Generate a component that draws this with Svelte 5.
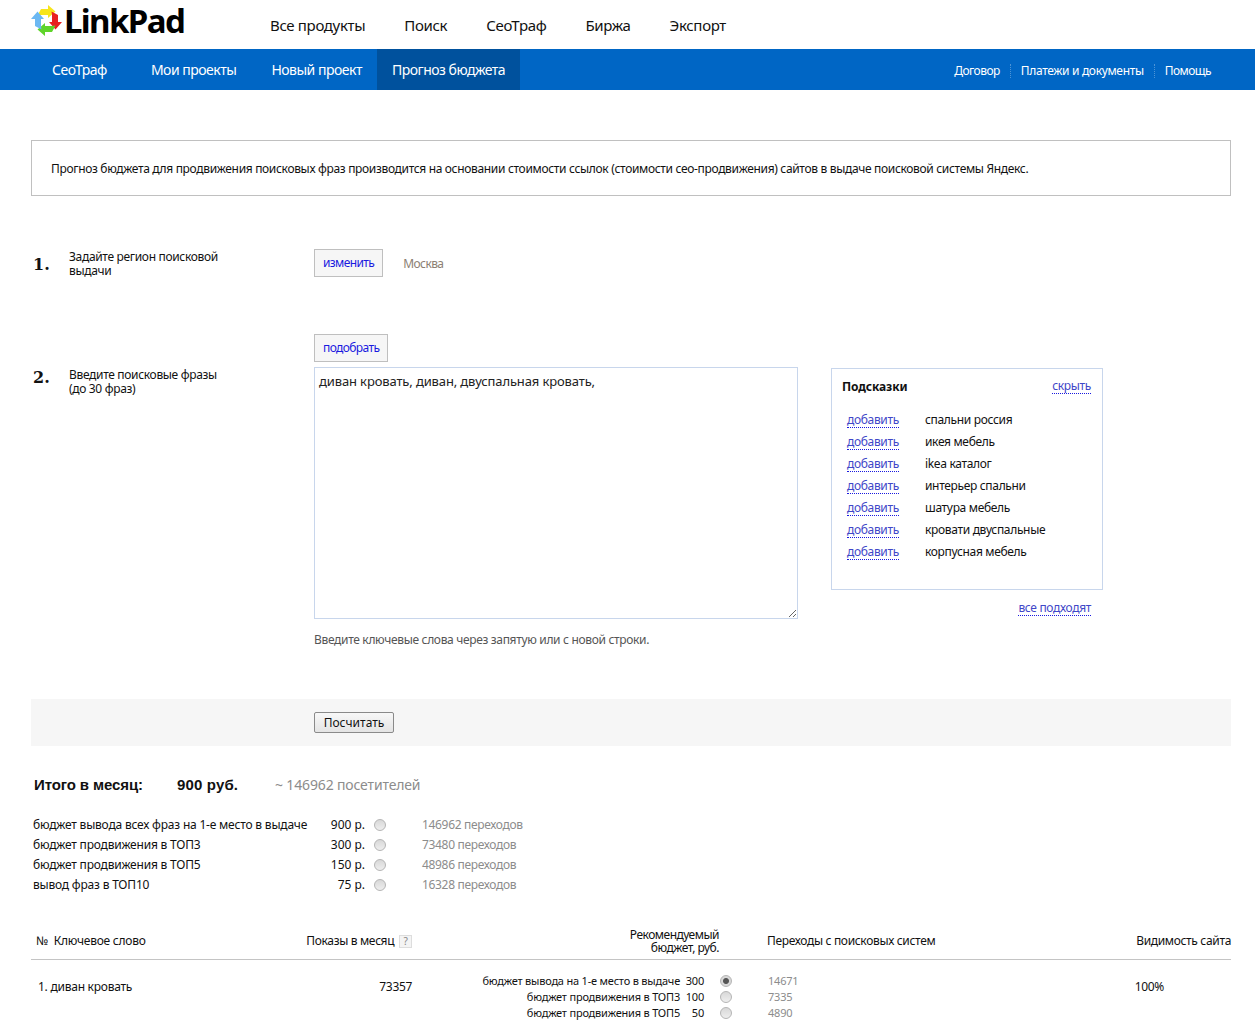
<script>
	const topLinks = ["Все продукты", "Поиск", "СеоТраф", "Биржа", "Экспорт"];
	const subLinks = ["СеоТраф", "Мои проекты", "Новый проект", "Прогноз бюджета"];
	const sideLinks = ["Договор", "Платежи и документы", "Помощь"];
	const hints = [
		"спальни россия",
		"икея мебель",
		"ikea каталог",
		"интерьер спальни",
		"шатура мебель",
		"кровати двуспальные",
		"корпусная мебель",
	];
	const budgets = [
		{ label: "бюджет вывода всех фраз на 1-е место в выдаче", price: "900 р.", visits: "146962 переходов" },
		{ label: "бюджет продвижения в ТОП3", price: "300 р.", visits: "73480 переходов" },
		{ label: "бюджет продвижения в ТОП5", price: "150 р.", visits: "48986 переходов" },
		{ label: "вывод фраз в ТОП10", price: "75 р.", visits: "16328 переходов" },
	];
	const rowBudgets = [
		{ label: "бюджет вывода на 1-е место в выдаче", price: 300, visits: 14671, on: true },
		{ label: "бюджет продвижения в ТОП3", price: 100, visits: 7335 },
		{ label: "бюджет продвижения в ТОП5", price: 50, visits: 4890 },
	];
	const arrowAngles = [
		{ angle: 0, color: "#f7e51c" },
		{ angle: 90, color: "#e8201f" },
		{ angle: 180, color: "#5fd42a" },
		{ angle: 270, color: "#6cb8f2" },
	];
</script>

<header class="top">
	<a class="logo" href="#top">
		<svg width="32" height="32" viewBox="0 0 32 32">
			{#each arrowAngles as a}
				<polygon
					points="6.5,10.5 10,4 17,4 17,0 24.5,6.5 17,13 17,10 10,10"
					fill={a.color}
					transform="rotate({a.angle} 15.5 15.5)"
				/>
			{/each}
		</svg>
		<span>LinkPad</span>
	</a>
	<nav class="top-links">
		{#each topLinks as link}
			<a href="#top">{link}</a>
		{/each}
	</nav>
</header>

<div class="subnav">
	<nav class="sub-main">
		{#each subLinks as link, i}
			<a href="#top" class:active={i === 3}>{link}</a>
		{/each}
	</nav>
	<nav class="sub-side">
		{#each sideLinks as link}
			<a href="#top">{link}</a>
		{/each}
	</nav>
</div>

<main>
	<p class="info">
		Прогноз бюджета для продвижения поисковых фраз производится на основании стоимости ссылок (стоимости сео-продвижения) сайтов в выдаче поисковой системы Яндекс.
	</p>

	<section class="step step-one">
		<b class="num">1.</b>
		<div class="step-label">Задайте регион поисковой<br />выдачи</div>
		<div class="region">
			<a class="btn" href="#top">изменить</a>
			<span class="city">Москва</span>
		</div>
	</section>

	<section class="step step-two">
		<b class="num">2.</b>
		<div class="step-label">Введите поисковые фразы<br />(до 30 фраз)</div>
		<div class="phrases">
			<a class="btn" href="#top">подобрать</a>
			<textarea>диван кровать, диван, двуспальная кровать,</textarea>
			<p class="hint">Введите ключевые слова через запятую или с новой строки.</p>
		</div>
		<aside class="tips">
			<div class="tips-box">
				<div class="tips-head">
					<b>Подсказки</b>
					<a class="dotted" href="#top">скрыть</a>
				</div>
				<ul>
					{#each hints as hint}
						<li><a class="dotted" href="#top">добавить</a><span>{hint}</span></li>
					{/each}
				</ul>
			</div>
			<a class="dotted all" href="#top">все подходят</a>
		</aside>
	</section>

	<div class="submit-bar">
		<button type="button">Посчитать</button>
	</div>

	<div class="total">
		<b class="total-label">Итого в месяц:</b>
		<b class="total-sum">900 руб.</b>
		<span>~ 146962 посетителей</span>
	</div>

	<div class="budgets">
		{#each budgets as b}
			<div class="budget">
				<span class="b-label">{b.label}</span>
				<span class="b-price">{b.price}</span>
				<input type="radio" name="total" />
				<span class="b-visits">{b.visits}</span>
			</div>
		{/each}
	</div>

	<div class="table-head">
		<div class="col-key">№&nbsp; Ключевое слово</div>
		<div class="col-shows">Показы в месяц <span class="q">?</span></div>
		<div class="col-rec">Рекомендуемый<br />бюджет, руб.</div>
		<div class="col-trans">Переходы с поисковых систем</div>
		<div class="col-vis">Видимость сайта</div>
	</div>

	<div class="table-row">
		<div class="col-key cell-key">1. диван кровать</div>
		<div class="col-shows cell-shows">73357</div>
		<div class="cell-budgets">
			{#each rowBudgets as r}
				<div class="row-budget">
					<span class="r-label">{r.label}</span>
					<span class="r-price">{r.price}</span>
					<input type="radio" name="row" checked={r.on} />
					<span class="r-visits">{r.visits}</span>
				</div>
			{/each}
		</div>
		<div class="col-vis cell-vis">100%</div>
	</div>
</main>

<style>
	:global(body) {
		font-family: "Noto Sans", "Open Sans", sans-serif;
		font-size: 12px;
		letter-spacing: -0.33px;
		color: #111;
		background: #fff;
	}
	a {
		text-decoration: none;
	}
	.top {
		height: 49px;
		display: flex;
		align-items: flex-start;
		padding-left: 31px;
	}
	.logo {
		display: flex;
		align-items: center;
		width: 239px;
		height: 41px;
		color: #000;
		font-size: 33px;
		font-weight: 700;
		letter-spacing: -1.6px;
	}
	.logo svg {
		flex: none;
		margin-right: 1px;
	}
	.top-links {
		display: flex;
		gap: 39px;
		padding-top: 14px;
	}
	.top-links a {
		color: #111;
		font-size: 15px;
		letter-spacing: -0.33px;
		line-height: 22px;
	}
	.subnav {
		height: 41px;
		background: #0066c5;
		display: flex;
		justify-content: space-between;
		color: #fff;
	}
	.sub-main {
		display: flex;
		padding-left: 37px;
	}
	.sub-main a {
		color: #fff;
		font-size: 14px;
		letter-spacing: -0.5px;
		line-height: 41px;
		padding: 0 15px;
	}
	.sub-main a:nth-child(1) {
		margin-right: 14px;
	}
	.sub-main a:nth-child(2) {
		margin-right: 5px;
	}
	.sub-main a.active {
		background: #00519d;
	}
	.sub-side {
		display: flex;
		align-items: center;
		padding-right: 34px;
		padding-top: 3px;
	}
	.sub-side a {
		color: #fff;
		font-size: 12px;
		letter-spacing: -0.55px;
		line-height: 14px;
		padding: 0 10px;
		border-left: 1px dotted #4d94d6;
	}
	.sub-side a:nth-child(2) {
		letter-spacing: -0.33px;
	}
	.sub-side a:first-child {
		border-left: 0;
	}
	main {
		width: 1200px;
		margin-left: 31px;
		padding-top: 50px;
	}
	.info {
		margin: 0;
		height: 56px;
		box-sizing: border-box;
		border: 1px solid #c0c0c0;
		padding: 1px 19px 0;
		line-height: 54px;
		white-space: nowrap;
	}
	.step {
		display: grid;
		grid-template-columns: 38px 245px 517px auto;
		align-items: start;
	}
	.step-one {
		margin-top: 53px;
		height: 85px;
	}
	.step-two {
		height: 365px;
	}
	.num {
		font-family: "DejaVu Serif", serif;
		font-size: 16px;
		letter-spacing: 0;
		line-height: 20px;
		padding-left: 2px;
		padding-top: 6px;
	}
	.step-label {
		line-height: 14px;
		padding-top: 1px;
		white-space: nowrap;
	}
	.step-two .num {
		margin-top: 28px;
	}
	.step-two .step-label {
		margin-top: 33px;
	}
	.region {
		display: flex;
		align-items: center;
		gap: 20px;
	}
	.btn {
		display: inline-block;
		background: #f6f6f6;
		border: 1px solid #bfbfbf;
		color: #1a1ae0;
		letter-spacing: -0.6px;
		line-height: 26px;
		padding: 0 8px;
	}
	.city {
		color: #8c8073;
		letter-spacing: -0.6px;
	}
	.phrases {
		display: flex;
		flex-direction: column;
		align-items: flex-start;
	}
	textarea {
		display: block;
		box-sizing: border-box;
		width: 484px;
		height: 252px;
		margin-top: 5px;
		padding: 6px 4px;
		border: 1px solid #c8d6ec;
		font: inherit;
		font-size: 13px;
		letter-spacing: -0.13px;
		line-height: 15px;
		color: #222;
		outline: none;
	}
	.hint {
		margin: 14px 0 0;
		color: #555;
		line-height: 14px;
	}
	.tips {
		display: flex;
		flex-direction: column;
		width: 272px;
		margin-top: 34px;
	}
	.tips-box {
		box-sizing: border-box;
		width: 272px;
		height: 222px;
		border: 1px solid #c8d6ec;
		padding: 10px 11px 0 10px;
	}
	.tips-head {
		display: flex;
		justify-content: space-between;
		align-items: center;
		line-height: 16px;
	}
	.tips-head b {
		letter-spacing: -0.1px;
	}
	.tips ul {
		list-style: none;
		margin: 16px 0 0;
		padding: 0 0 0 5px;
	}
	.tips li {
		display: grid;
		grid-template-columns: 78px auto;
		height: 22px;
		line-height: 18px;
	}
	.tips li a {
		justify-self: start;
		margin-top: 2px;
	}
	.dotted {
		color: #3f47c8;
		border-bottom: 1px dotted #1a1ae0;
		line-height: 14px;
		align-self: start;
	}
	.all {
		align-self: flex-end;
		margin: 11px 12px 0 0;
	}
	.submit-bar {
		height: 47px;
		background: #f6f6f6;
		padding: 13px 0 0 283px;
		box-sizing: border-box;
	}
	button {
		display: block;
		height: 21px;
		width: 80px;
		padding: 0;
		border: 1px solid #8a8a8a;
		border-radius: 2px;
		background: linear-gradient(#f8f8f8, #e4e4e4);
		font: inherit;
		font-size: 12px;
		letter-spacing: 0;
		color: #111;
	}
	.total {
		display: flex;
		align-items: baseline;
		margin-top: 30px;
		padding-left: 3px;
		font-size: 14px;
		letter-spacing: -0.15px;
		line-height: 18px;
		color: #8c8c8c;
	}
	.total b {
		font-family: "Liberation Sans", sans-serif;
		font-size: 15px;
		letter-spacing: -0.1px;
		color: #111;
	}
	.total b.total-sum {
		width: 98px;
		letter-spacing: 0.15px;
	}
	.total-label {
		width: 143px;
	}
	.budgets {
		margin-top: 20px;
		padding-left: 2px;
	}
	.budget {
		display: flex;
		align-items: center;
		height: 20px;
	}
	.b-label {
		width: 282px;
		white-space: nowrap;
		letter-spacing: -0.2px;
	}
	.b-price {
		width: 50px;
		text-align: right;
		letter-spacing: 0;
	}
	.b-visits {
		color: #8c8c8c;
		margin-left: 36px;
	}
	input[type="radio"] {
		appearance: none;
		box-sizing: border-box;
		flex: none;
		width: 12px;
		height: 12px;
		margin: 2px 0 0 9px;
		border: 1px solid #b5b5b5;
		border-radius: 50%;
		background: linear-gradient(#d8d8d8, #eeeeee);
	}
	input[type="radio"]:checked {
		background: radial-gradient(circle, #555 0 2.5px, #d8d8d8 3.5px);
	}
	.table-head {
		display: flex;
		align-items: center;
		height: 50px;
		box-sizing: border-box;
		margin-top: 16px;
		padding-top: 12px;
		border-bottom: 1px solid #c4c4c4;
		line-height: 13px;
	}
	.col-key {
		width: 261px;
		padding-left: 5px;
		box-sizing: border-box;
		flex: none;
		letter-spacing: -0.25px;
	}
	.col-shows {
		width: 120px;
		flex: none;
		text-align: right;
		white-space: nowrap;
	}
	.q {
		display: inline-block;
		box-sizing: border-box;
		width: 13px;
		height: 13px;
		line-height: 11px;
		border: 1px solid #ddd;
		background: #f4f4f4;
		color: #888;
		font-size: 10px;
		text-align: center;
		margin-left: 2px;
	}
	.col-rec {
		width: 307px;
		flex: none;
		text-align: right;
		letter-spacing: -0.5px;
	}
	.col-trans {
		margin-left: 48px;
	}
	.col-vis {
		margin-left: auto;
		text-align: right;
	}
	.table-row {
		display: flex;
		align-items: flex-start;
		padding-top: 12px;
	}
	.cell-key,
	.cell-shows,
	.cell-vis {
		margin-top: 7px;
		line-height: 16px;
	}
	.cell-key {
		padding-left: 7px;
	}
	.cell-budgets {
		width: 418px;
		flex: none;
	}
	.row-budget {
		display: flex;
		align-items: center;
		height: 16px;
		font-size: 11px;
		letter-spacing: -0.2px;
	}
	.r-label {
		width: 268px;
		text-align: right;
		white-space: nowrap;
	}
	.r-price {
		width: 24px;
		text-align: right;
	}
	.row-budget input {
		margin-left: 16px;
	}
	.r-visits {
		margin-left: 36px;
		color: #8c8c8c;
	}
	.cell-vis {
		padding-right: 67px;
	}
</style>
